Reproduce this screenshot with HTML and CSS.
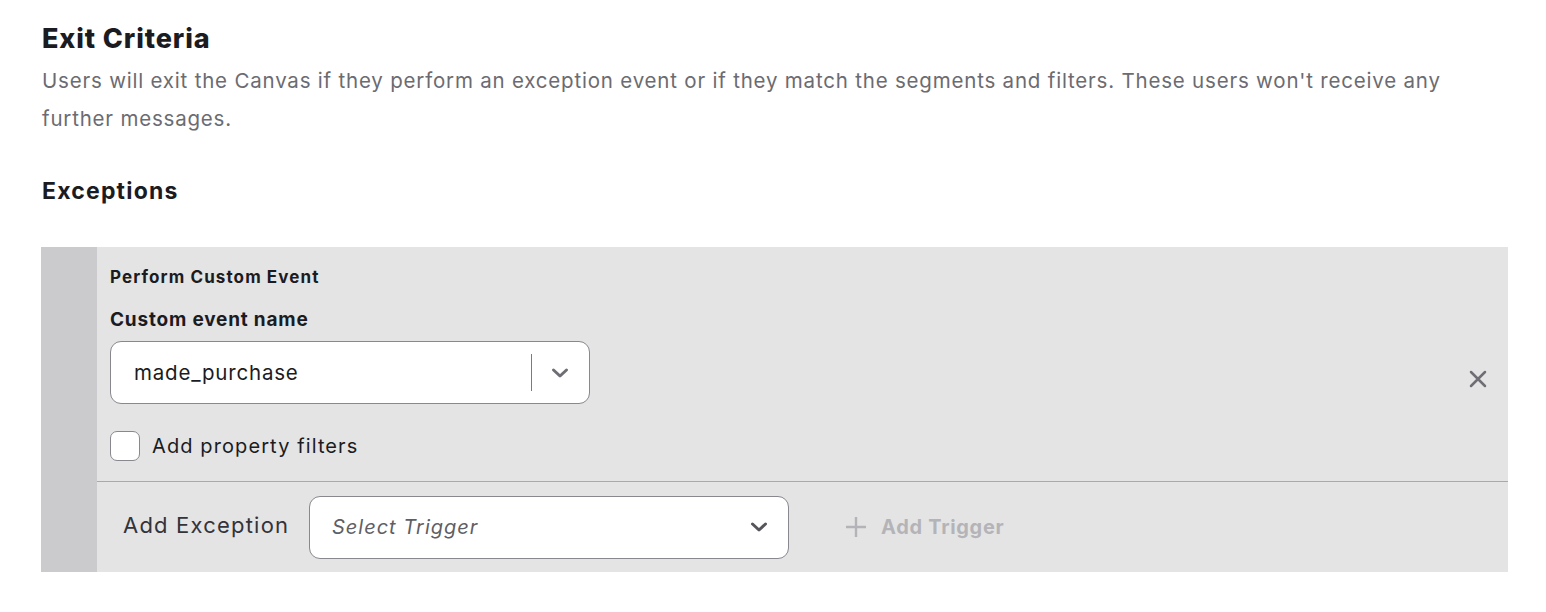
FILE: index.html
```html
<!DOCTYPE html>
<html lang="en">
<head>
<meta charset="utf-8">
<title>Exit Criteria</title>
<link rel="stylesheet" href="styles.css">
</head>
<body>
<main class="page">
  <h1 class="title">Exit Criteria</h1>
  <p class="desc">Users will exit the Canvas if they perform an exception event or if they match the segments and filters. These users won't receive any further messages.</p>
  <h2 class="subtitle">Exceptions</h2>
  <section class="panel">
    <div class="panel-bar"></div>
    <div class="panel-main">
      <div class="exception">
        <div class="exception-body">
          <div class="event-type">Perform Custom Event</div>
          <label class="field-label">Custom event name</label>
          <div class="select select-event">
            <span class="select-value">made_purchase</span>
            <span class="select-sep"></span>
            <svg class="chev" width="20" height="12" viewBox="0 0 20 12"><path d="M3.5 3 L10 9 L16.5 3" fill="none" stroke="#6e6e74" stroke-width="3" stroke-linecap="round" stroke-linejoin="round"/></svg>
          </div>
          <label class="check-row">
            <span class="checkbox"></span>
            <span class="check-text">Add property filters</span>
          </label>
        </div>
        <svg class="close" width="20" height="20" viewBox="0 0 20 20"><path d="M3 3 L17 17 M17 3 L3 17" stroke="#6e6e74" stroke-width="2.5" stroke-linecap="round"/></svg>
      </div>
      <div class="add-row">
        <span class="add-label">Add Exception</span>
        <div class="select select-trigger">
          <span class="placeholder">Select Trigger</span>
          <svg class="chev" width="20" height="12" viewBox="0 0 20 12"><path d="M3.5 3 L10 9 L16.5 3" fill="none" stroke="#55555b" stroke-width="3" stroke-linecap="round" stroke-linejoin="round"/></svg>
        </div>
        <span class="add-trigger">
          <svg width="22" height="22" viewBox="0 0 22 22"><path d="M11 1 V21 M1 11 H21" stroke="#b4b4b8" stroke-width="2.4"/></svg>
          <span>Add Trigger</span>
        </span>
      </div>
    </div>
  </section>
</main>
</body>
</html>
```

FILE: styles.css
```css
* { box-sizing: border-box; }
html, body { margin: 0; padding: 0; background: #fff; }
body {
  font-family: "Inter", "Lato", "Noto Sans", sans-serif;
  color: #1b1b22;
}
.page {
  padding: 22px 38px 0 41px;
  width: 1546px;
}
.title {
  margin: 0 0 0 1px;
  font-size: 27px;
  line-height: 34px;
  font-weight: 800;
  letter-spacing: 0.9px;
}
.desc {
  margin: 6px 0 0 1px;
  font-size: 20.5px;
  line-height: 38px;
  letter-spacing: 0.8px;
  color: #6b6b71;
  max-width: 1450px;
}
.subtitle {
  margin: 39px 0 0 1px;
  font-size: 23px;
  line-height: 28px;
  font-weight: 700;
  letter-spacing: 1.2px;
}
.panel {
  margin-top: 42px;
  display: flex;
  width: 1467px;
  height: 325px;
  background: #e4e4e5;
}
.panel-bar {
  width: 56px;
  flex: none;
  background: #cbcbcd;
}
.panel-main {
  flex: 1;
  display: flex;
  flex-direction: column;
}
.exception {
  height: 235px;
  border-bottom: 1px solid #a9a9ad;
  display: flex;
  align-items: center;
  padding: 0 20px 0 13px;
}
.exception-body {
  flex: 1;
  display: flex;
  flex-direction: column;
  align-self: flex-start;
  padding-top: 19px;
}
.event-type {
  font-size: 17px;
  line-height: 22px;
  font-weight: 700;
  letter-spacing: 1.1px;
}
.field-label {
  margin-top: 20px;
  font-size: 19px;
  line-height: 24px;
  font-weight: 700;
  letter-spacing: 0.8px;
}
.select {
  display: flex;
  align-items: center;
  width: 480px;
  height: 63px;
  background: #fff;
  border: 1px solid #88888e;
  border-radius: 11px;
}
.select-event {
  margin-top: 9px;
  padding: 0 19px 0 23px;
}
.select-value {
  flex: 1;
  font-size: 20.5px;
  letter-spacing: 0.8px;
  color: #1b1b22;
}
.select-sep {
  width: 1px;
  height: 37px;
  background: #7a7a80;
  margin-right: 18px;
}
.check-row {
  display: flex;
  align-items: center;
  margin-top: 27px;
}
.checkbox {
  width: 30px;
  height: 30px;
  background: #fff;
  border: 1px solid #88888e;
  border-radius: 7px;
  margin-right: 12px;
}
.check-text {
  font-size: 20px;
  letter-spacing: 1.1px;
}
.close { flex: none; margin-top: 30px; }
.add-row {
  flex: 1;
  display: flex;
  align-items: center;
  padding: 0 0 0 26px;
}
.add-label {
  font-size: 22px;
  letter-spacing: 1.2px;
  color: #333339;
  width: 186px;
  padding-bottom: 5px;
}
.select-trigger {
  padding: 0 19px 0 22px;
  justify-content: space-between;
}
.placeholder {
  font-size: 20px;
  font-style: italic;
  letter-spacing: 1px;
  color: #5e5e64;
}
.add-trigger {
  margin-left: 56px;
  display: flex;
  align-items: center;
  gap: 14px;
  font-size: 20px;
  font-weight: 700;
  letter-spacing: 0.7px;
  color: #b4b4b8;
}
```
